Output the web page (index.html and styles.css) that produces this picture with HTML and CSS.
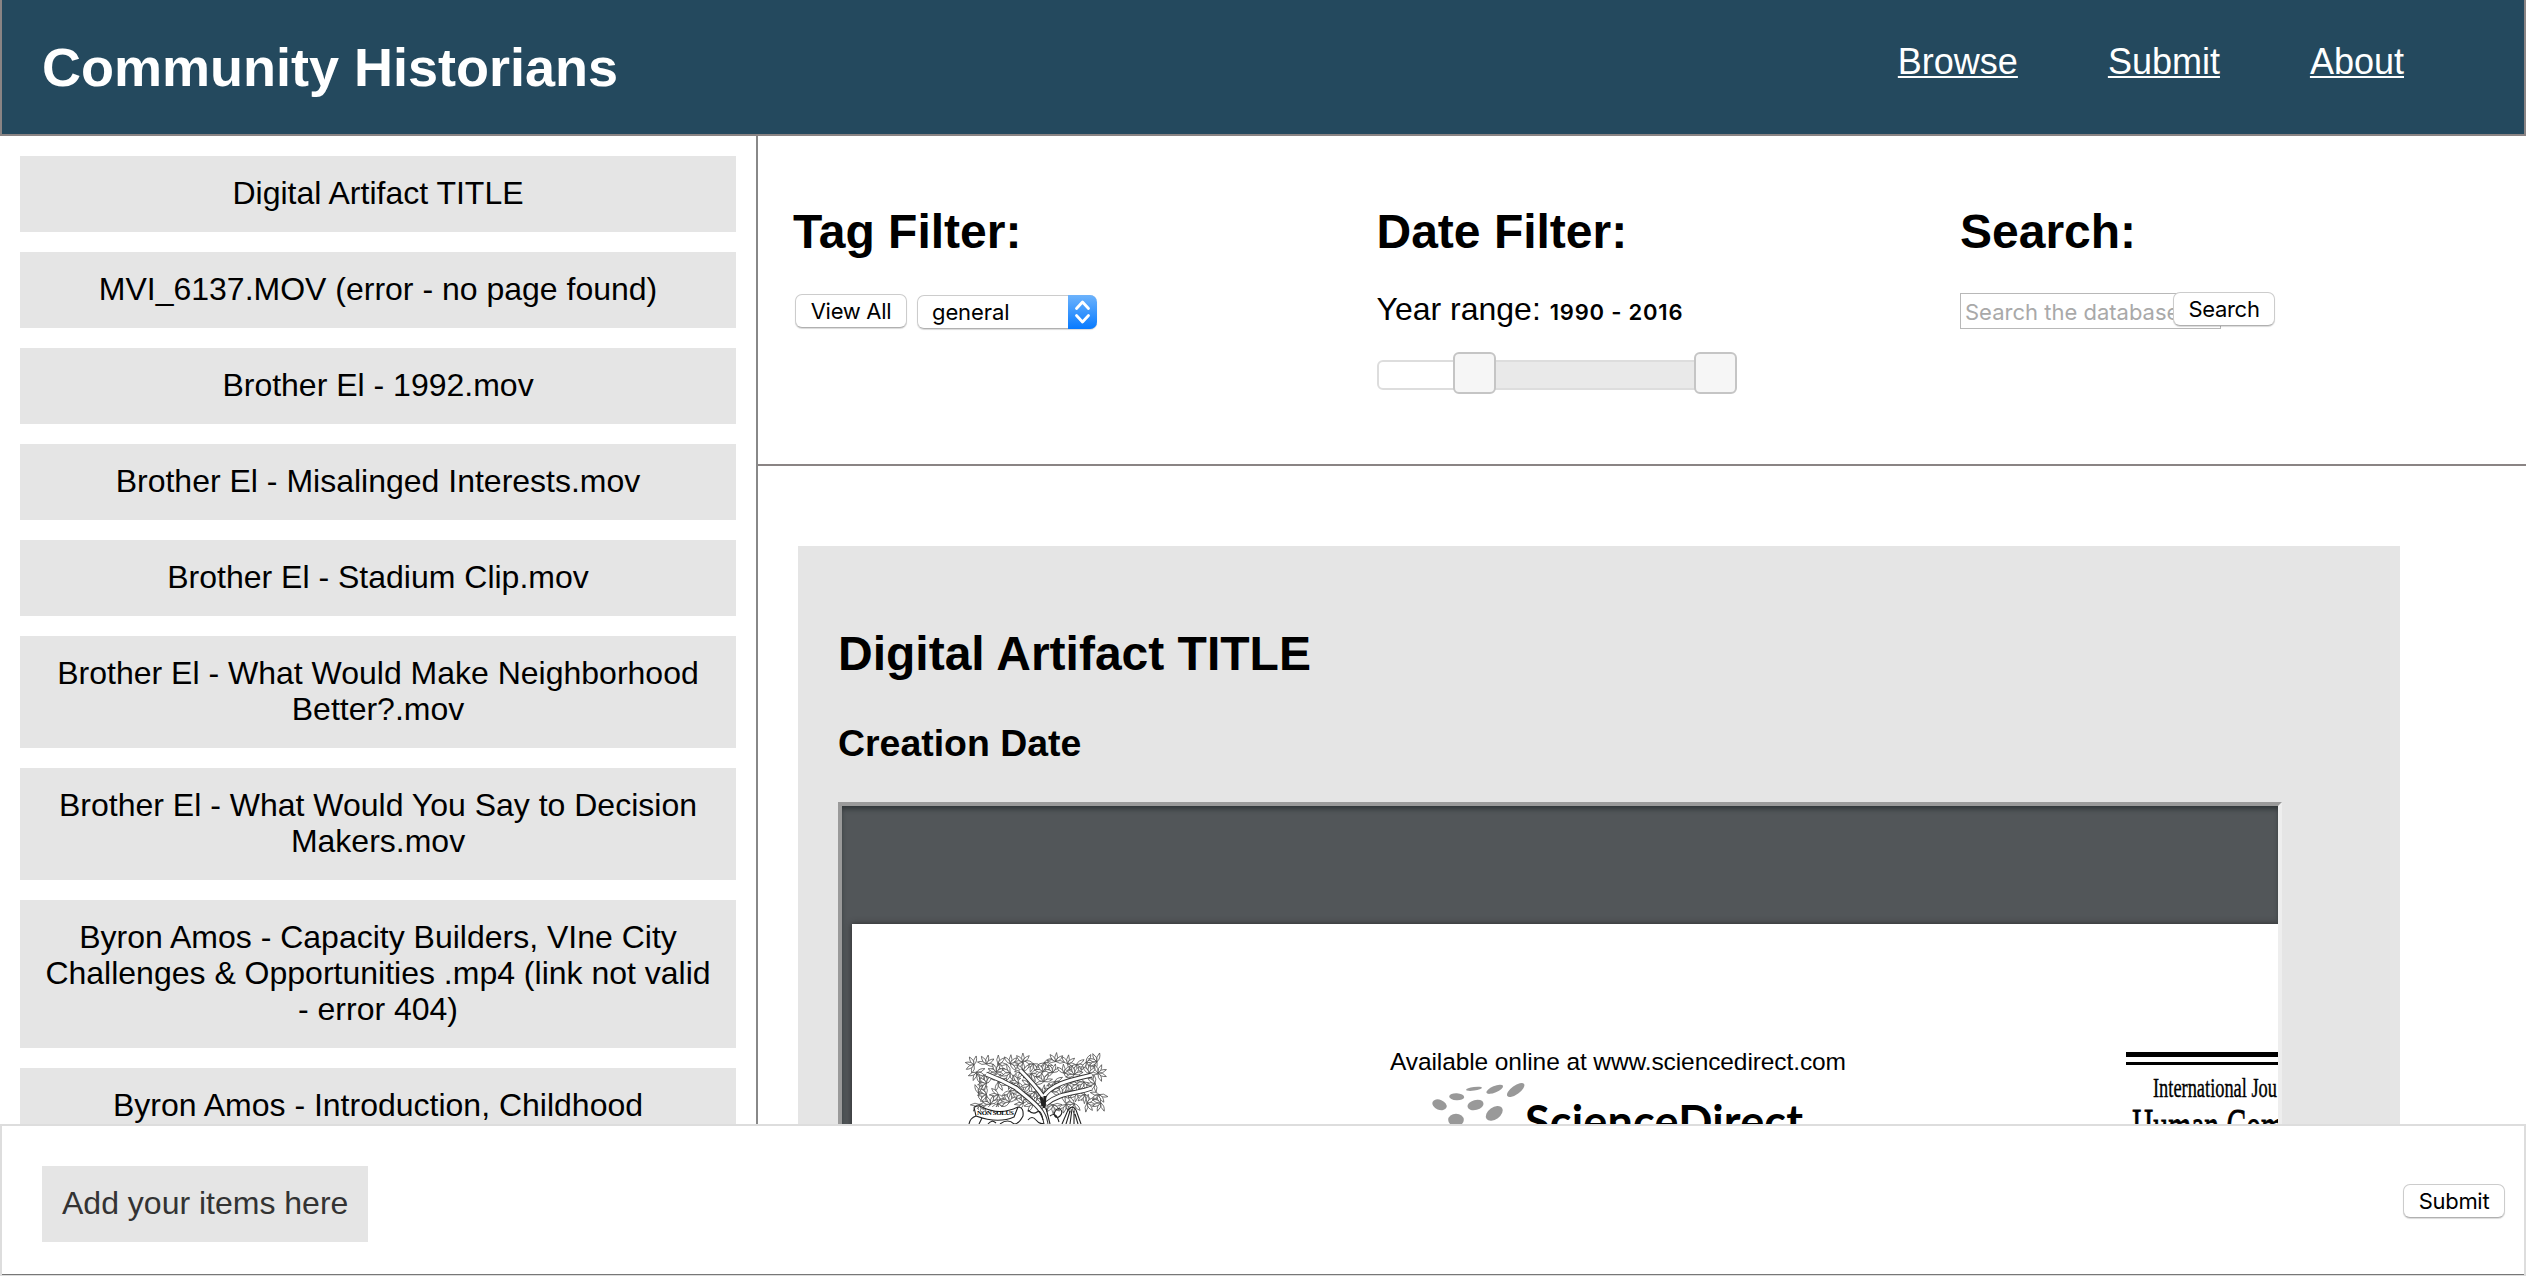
FILE: index.html
```html
<!DOCTYPE html>
<html lang="en">
<head>
<meta charset="utf-8">
<title>Community Historians</title>
<link rel="stylesheet" href="styles.css">
</head>
<body>
<header class="header">
  <h1 class="brand">Community Historians</h1>
  <nav class="nav"><a href="#">Browse</a><a href="#">Submit</a><a href="#">About</a></nav>
</header>
<main class="main">
  <aside class="sidebar">
    <div class="item">Digital Artifact TITLE</div>
    <div class="item">MVI_6137.MOV (error - no page found)</div>
    <div class="item">Brother El - 1992.mov</div>
    <div class="item">Brother El - Misalinged Interests.mov</div>
    <div class="item">Brother El - Stadium Clip.mov</div>
    <div class="item">Brother El - What Would Make Neighborhood Better?.mov</div>
    <div class="item">Brother El - What Would You Say to Decision Makers.mov</div>
    <div class="item">Byron Amos - Capacity Builders, VIne City Challenges &amp; Opportunities .mp4 (link not valid - error 404)</div>
    <div class="item">Byron Amos - Introduction, Childhood</div>
  </aside>
  <section class="content">
    <div class="filters">
      <div class="filter">
        <h2>Tag Filter:</h2>
        <div class="controls">
          <button class="btn btn-view">View All</button>
          <div class="select"><span>general</span>
            <svg class="arrows" viewBox="0 0 29 34" width="29" height="34"><path d="M8.500 13.500l6-6.500 6 6.500M8.500 20.500l6 6.500 6-6.500" fill="none" stroke="#fff" stroke-width="2.800" stroke-linecap="round" stroke-linejoin="round"/></svg>
          </div>
        </div>
      </div>
      <div class="filter">
        <h2>Date Filter:</h2>
        <p class="range">Year range: <b>1990 - 2016</b></p>
        <div class="slider"><i class="span"></i><i class="handle low"></i><i class="handle high"></i></div>
      </div>
      <div class="filter">
        <h2>Search:</h2>
        <div class="search"><div class="field">Search the database</div><button class="btn btn-search">Search</button></div>
      </div>
    </div>
    <article class="card">
      <h2>Digital Artifact TITLE</h2>
      <h3>Creation Date</h3>
      <div class="frame">
        <div class="paper">
          <svg class="page" viewBox="852 924 1426 200" width="1426" height="200">
            <g fill="none" stroke="#333" stroke-width="1">
              <g id="leaves"></g>
              <path stroke="#333" stroke-width="5" d="M1046 1124C1044 1108 1030 1100 1016 1088Q1002 1080 986 1074M1044 1098Q1036 1086 1020 1070M1043 1098C1050 1084 1070 1080 1092 1075M1046 1104C1060 1092 1076 1094 1092 1088"/>
              <path stroke="#fff" stroke-width="3" d="M1046 1124C1044 1108 1030 1100 1016 1088Q1002 1080 986 1074M1044 1098Q1036 1086 1020 1070M1043 1098C1050 1084 1070 1080 1092 1075M1046 1104C1060 1092 1076 1094 1092 1088"/>
              <path stroke="#222" stroke-width="3" d="M1041 1097l2 9M1045 1096l-1 12"/>
              <g stroke="#222" stroke-width="1.100">
                <path d="M1056 1110c4-4 8 2 4 6s-8-1-4-6zM1028 1120q4-5 8 0t8 3M1028 1110q5 5 9 2t6 8M1050 1116q6-5 9 6M1046 1108l4 16M1062 1124l6-14q4-6 8 0l5 14M1066 1124l4-13M1070 1124l2-15M1074 1124l0-13M1078 1124l-3-10"/>
                <path fill="#fff" d="M974 1107q5-2 8 0q18 9 36 0q6 0 5 9q-4 8-9 8q-6-6-14 0M974 1107l2 9q22 8 38 1l4-10M976 1116q-6 2-7 8M982 1118l-3 6M988 1124q4-5 8-1"/>
              </g>
            </g>
            <text class="motto" x="977" y="1114.500" textLength="37">NON SOLUS</text>
            <text class="avail" x="1390" y="1070" textLength="456">Available online at www.sciencedirect.com</text>
            <g fill="#999">
              <ellipse cx="1439.500" cy="1104.800" rx="7.500" ry="5" transform="rotate(22 1439.500 1104.800)"/>
              <ellipse cx="1456.700" cy="1096.800" rx="7.500" ry="3.500" transform="rotate(3 1456.700 1096.800)"/>
              <ellipse cx="1474" cy="1088.800" rx="8" ry="1.800" transform="rotate(-8 1474 1088.800)"/>
              <ellipse cx="1494.700" cy="1089.300" rx="9" ry="3.200" transform="rotate(-23 1494.700 1089.300)"/>
              <ellipse cx="1515.700" cy="1090" rx="10.300" ry="4.300" transform="rotate(-36 1515.700 1090)"/>
              <ellipse cx="1475.500" cy="1105" rx="8.200" ry="5" transform="rotate(-15 1475.500 1105)"/>
              <ellipse cx="1494.300" cy="1113.300" rx="9.500" ry="6" transform="rotate(-36 1494.300 1113.300)"/>
              <ellipse cx="1456" cy="1120" rx="7.800" ry="6.200"/>
            </g>
            <text class="sd" x="1525" y="1138" textLength="278">ScienceDirect</text>
            <path d="M2126 1052h152v5h-152zM2126 1062h152v3h-152z"/>
            <text class="journal" x="2153" y="1096.500" textLength="124" lengthAdjust="spacingAndGlyphs">International Jou</text>
            <text class="human" x="2132" y="1143" textLength="152" lengthAdjust="spacingAndGlyphs">Human Com</text>
          </svg>
        </div>
      </div>
    </article>
  </section>
</main>
<footer class="tray">
  <div class="drop">Add your items here</div>
  <button class="btn btn-submit">Submit</button>
</footer>
<script src="leaves.js"></script>
</body>
</html>
```
FILE: styles.css
```css
* { box-sizing: border-box; }
body {
  margin: 0;
  height: 1276px;
  overflow: hidden;
  display: flex;
  flex-direction: column;
  background: #fff;
  color: #000;
  font: 32px/36px "Liberation Sans", Arial, sans-serif;
}
h1, h2, h3, p { margin: 0; }
.header {
  flex: none;
  height: 136px;
  display: flex;
  justify-content: space-between;
  background: #24495e;
  border: 2px solid #8a8484;
  border-top: 0;
  color: #fff;
}
.brand { padding: 35px 0 0 40px; font-size: 54px; line-height: 64px; }
.nav { display: flex; gap: 90px; padding: 41px 120px 0 0; font-size: 36px; line-height: 42px; }
.nav a { color: #fff; text-decoration-thickness: 2px; text-underline-offset: 2px; }
.main { flex: none; height: 988px; display: flex; overflow: hidden; }
.sidebar {
  flex: none;
  width: 758px;
  padding: 20px 20px 0;
  border-right: 2px solid #888;
  display: flex;
  flex-direction: column;
  gap: 20px;
}
.item { flex: none; padding: 19px 20px 21px; background: #e5e5e5; text-align: center; }
.item:last-child { height: 112px; }
.content { flex: 1; min-width: 0; }
.filters {
  height: 330px;
  display: grid;
  grid-template-columns: repeat(3, 583.500px);
  padding: 68px 0 0 35px;
  border-bottom: 2px solid #8a8484;
}
h2 { font-size: 48px; line-height: 56px; }
.controls { display: flex; gap: 10px; padding: 34px 0 0 2px; }
.btn {
  height: 34px;
  padding: 0;
  background: #fff;
  border: 1px solid #ccc;
  border-bottom-color: #b0b0b0;
  border-radius: 7px;
  box-shadow: 0 1px 1px rgba(0, 0, 0, .15);
  color: #000;
  font: 22px/32px Inter, sans-serif;
  letter-spacing: -.3px;
}
.btn-view { width: 112px; }
.select {
  width: 180px;
  height: 34px;
  margin-top: 1px;
  display: flex;
  justify-content: space-between;
  border: 1px solid #ccc;
  border-right: 0;
  border-bottom-color: #b0b0b0;
  border-radius: 7px;
  box-shadow: 0 1px 1px rgba(0, 0, 0, .15);
  font: 22px/32px Inter, sans-serif;
  letter-spacing: -.1px;
}
.select span { padding-left: 14px; }
.arrows { margin-top: -1px; background: linear-gradient(#6db3fc, #077aff); border-radius: 0 7px 7px 0; }
.range { padding-top: 31px; height: 67px; }
.range b { font: 600 22px/36px Inter, sans-serif; letter-spacing: .8px; }
.slider {
  position: relative;
  width: 360px;
  height: 30px;
  margin-top: 33px;
  border: 2px solid #ddd;
  border-radius: 6px;
}
.span { position: absolute; inset: 0 20px 0 96px; background: #e9e9e9; }
.handle {
  position: absolute;
  top: -10px;
  width: 43px;
  height: 42px;
  background: #f6f6f6;
  border: 2px solid #c5c5c5;
  border-radius: 6px;
}
.low { left: 74px; }
.high { right: -2px; }
.search { display: flex; padding-top: 32px; }
.field {
  flex: none;
  width: 261px;
  height: 36px;
  margin-top: 1px;
  padding-left: 4px;
  border: 1px solid #b8b8b8;
  color: #a9a9a9;
  font: 22px/37px Inter, sans-serif;
  white-space: nowrap;
}
.btn-search { position: relative; width: 102px; margin-left: -48px; }
.card { width: 1602px; height: 700px; margin: 80px 0 0 40px; padding: 80px 40px 0; background: #e5e5e5; }
.card h3 { margin-top: 40px; font-size: 37.440px; line-height: 43px; }
.frame {
  width: 1444px;
  height: 500px;
  margin-top: 37px;
  padding: 118px 0 0 10px;
  border: 4px solid #eee;
  border-top-color: #9a9a9a;
  border-left-color: #9a9a9a;
  background: #525659;
  box-shadow: inset 0 4px 5px -1px #2e3436;
}
.paper { height: 400px; background: #fff; box-shadow: 0 0 6px #2a2a2a; clip-path: inset(-8px 0 0 -8px); }
.page { display: block; }
.avail { font-size: 24.500px; }
.sd { font: bold 45px Lato, sans-serif; }
.motto { font: bold 7px "Liberation Serif", serif; }
.journal { font: 28px "Liberation Serif", serif; stroke: #000; stroke-width: .4px; }
.human { font: 50px "Liberation Serif", serif; stroke: #000; stroke-width: .8px; }
.tray {
  flex: none;
  height: 152px;
  display: flex;
  justify-content: space-between;
  padding: 40px 19px 0 40px;
  background: linear-gradient(#777, #777) 0 100% / 100% 1px no-repeat #fff;
  border: 2px solid #ddd;
  border-bottom-width: 1px;
}
.drop { height: 76px; padding: 19px 20px; background: #e5e5e5; color: #333; }
.btn-submit { width: 102px; margin-top: 18px; }
```
FILE: leaves.js
```js
// Fills the crown of the engraved tree with small leaf sprays.
const crown = document.getElementById('leaves');
const leaf = (x, y, a) =>
  `<path fill="#fff" stroke="#444" stroke-width=".7" transform="translate(${x} ${y}) rotate(${a})" d="M0 0Q4 -2.800 9 0Q4 2.800 0 0"/>`;
let seed = 7;
const rand = () => (seed = (seed * 16807) % 2147483647) / 2147483647;
let out = '';
for (let row = 0; row < 5; row++) {
  for (let col = 0; col < 12; col++) {
    const x = 974 + col * 11 + rand() * 6;
    const y = 1061 + row * 10 + rand() * 4;
    const base = rand() * 360;
    for (let k = 0; k < 5; k++) out += leaf(x.toFixed(1), y.toFixed(1), Math.round(base + k * 45));
  }
}
crown.innerHTML = out;
```
